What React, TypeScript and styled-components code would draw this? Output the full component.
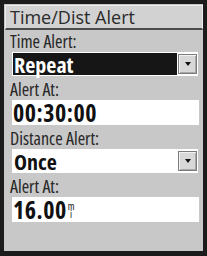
import React from "react";
import styled, { createGlobalStyle } from "styled-components";

const GlobalStyle = createGlobalStyle`
  html, body {
    margin: 0;
    padding: 0;
    background: #c8c8c8;
  }
`;

const FONT = `"Open Sans", "Noto Sans", "DejaVu Sans", sans-serif`;

const Screen = styled.div`
  width: 207px;
  height: 256px;
  box-sizing: border-box;
  border: 4px solid #1c1c1c;
  border-bottom-width: 5px;
  background: #c8c8c8;
  display: flex;
  flex-direction: column;
  font-family: ${FONT};
  font-stretch: 85%;
  color: #262626;
`;

const TitleBar = styled.div`
  margin: 1px 0 0 1px;
  height: 25px;
  box-sizing: border-box;
  border: 1px solid #ececec;
  border-bottom: 2px solid #4c4c4c;
  background: #d2d2d2;
  padding-left: 4px;
  font-size: 18px;
  line-height: 22px;
  font-stretch: 92%;
  color: #2a2a2a;
`;

const Body = styled.div`
  display: flex;
  flex-direction: column;
  padding: 0 4px 0 6px;
`;

const Label = styled.div<{ $tight?: boolean }>`
  height: ${(p) => (p.$tight ? 22 : 24)}px;
  display: flex;
  align-items: flex-end;
  font-size: 18px;
  line-height: 18px;
  padding-bottom: 2px;
  box-sizing: border-box;
`;

const Field = styled.div`
  margin-left: 2px;
  height: 25px;
  background: #fff;
  display: flex;
  align-items: center;
  padding-left: 1px;
  font-size: 24px;
  line-height: 25px;
  font-weight: bold;
  font-stretch: 80%;
  letter-spacing: 0.5px;
  color: #111;
`;

const Dropdown = styled.div`
  margin-left: 2px;
  margin-right: 1px;
  height: 24px;
  box-sizing: border-box;
  border: 1px solid #fff;
  background: #fff;
  display: flex;
  align-items: stretch;
`;

const Value = styled.div<{ $selected?: boolean }>`
  flex: 1;
  display: flex;
  align-items: center;
  padding-left: 1px;
  background: ${(p) => (p.$selected ? "#161616" : "#fff")};
  color: ${(p) => (p.$selected ? "#fff" : "#111")};
  font-size: 22px;
  line-height: 22px;
  font-weight: bold;
  font-stretch: 78%;
`;

const ArrowButton = styled.div`
  width: 19px;
  margin: 1px 0 1px 1px;
  box-sizing: border-box;
  background: #d8d8d8;
  border: 1px solid #7c7c7c;
  box-shadow: inset 1px 1px 0 #f2f2f2, inset -1px -1px 0 #a8a8a8;
  display: flex;
  align-items: center;
  justify-content: center;

  &::after {
    content: "";
    width: 0;
    height: 0;
    border-left: 3.5px solid transparent;
    border-right: 3.5px solid transparent;
    border-top: 4px solid #111;
  }
`;

const Unit = styled.span`
  display: inline-flex;
  flex-direction: column;
  align-items: center;
  font-size: 10px;
  line-height: 8px;
  font-weight: normal;
  letter-spacing: 0;
  margin-left: 1px;
`;

export default function App() {
  return (
    <>
      <GlobalStyle />
      <Screen>
        <TitleBar>Time/Dist Alert</TitleBar>
        <Body>
          <Label $tight>Time Alert:</Label>
          <Dropdown>
            <Value $selected>Repeat</Value>
            <ArrowButton />
          </Dropdown>
          <Label>Alert At:</Label>
          <Field>00:30:00</Field>
          <Label>Distance Alert:</Label>
          <Dropdown>
            <Value>Once</Value>
            <ArrowButton />
          </Dropdown>
          <Label>Alert At:</Label>
          <Field>
            16.00
            <Unit>
              <span>m</span>
              <span>i</span>
            </Unit>
          </Field>
        </Body>
      </Screen>
    </>
  );
}
